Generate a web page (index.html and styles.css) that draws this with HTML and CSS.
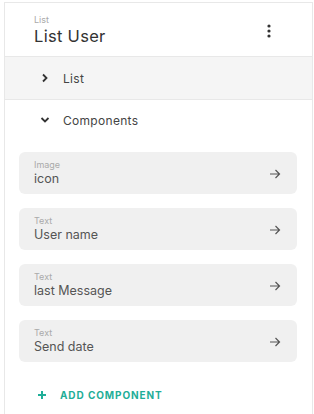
FILE: index.html
```html
<!DOCTYPE html>
<html>
<head>
<meta charset="utf-8">
<link rel="stylesheet" href="styles.css">
</head>
<body>
<div class="panel">
  <div class="header">
    <div class="titles">
      <div class="kind">List</div>
      <div class="name">List User</div>
    </div>
    <svg class="kebab" width="4" height="14" viewBox="0 0 4 14"><circle cx="2" cy="2" r="1.6"/><circle cx="2" cy="7" r="1.6"/><circle cx="2" cy="12" r="1.6"/></svg>
  </div>
  <div class="row row-closed">
    <svg class="chev" width="12" height="12" viewBox="0 0 12 12"><path d="M4 2.5 L7.5 6 L4 9.5" fill="none" stroke="#333" stroke-width="1.8"/></svg>
    <span>List</span>
  </div>
  <div class="row">
    <svg class="chev" width="12" height="12" viewBox="0 0 12 12"><path d="M2.5 4 L6 7.5 L9.5 4" fill="none" stroke="#333" stroke-width="1.8"/></svg>
    <span>Components</span>
  </div>
  <div class="cards">
    <div class="card"><div class="ct"><div class="lbl">Image</div><div class="val">icon</div></div><svg class="arrow" width="12" height="12" viewBox="0 0 12 12"><path d="M1 6 H10.5 M6.5 2 L10.5 6 L6.5 10" fill="none" stroke="#555" stroke-width="1.2"/></svg></div>
    <div class="card"><div class="ct"><div class="lbl">Text</div><div class="val">User name</div></div><svg class="arrow" width="12" height="12" viewBox="0 0 12 12"><path d="M1 6 H10.5 M6.5 2 L10.5 6 L6.5 10" fill="none" stroke="#555" stroke-width="1.2"/></svg></div>
    <div class="card"><div class="ct"><div class="lbl">Text</div><div class="val">last Message</div></div><svg class="arrow" width="12" height="12" viewBox="0 0 12 12"><path d="M1 6 H10.5 M6.5 2 L10.5 6 L6.5 10" fill="none" stroke="#555" stroke-width="1.2"/></svg></div>
    <div class="card"><div class="ct"><div class="lbl">Text</div><div class="val">Send date</div></div><svg class="arrow" width="12" height="12" viewBox="0 0 12 12"><path d="M1 6 H10.5 M6.5 2 L10.5 6 L6.5 10" fill="none" stroke="#555" stroke-width="1.2"/></svg></div>
  </div>
  <div class="add">
    <svg width="10" height="10" viewBox="0 0 10 10"><path d="M5 1 V9 M1 5 H9" stroke="#1fae98" stroke-width="2"/></svg>
    <span>ADD COMPONENT</span>
  </div>
</div>
</body>
</html>
```
FILE: styles.css
```css
html, body { margin: 0; padding: 0; background: #fff; }
body { font-family: Inter, "Noto Sans", sans-serif; color: #333; }
.panel {
  margin-left: 4px;
  width: 307px;
  height: 414px;
  border-left: 1px solid #e8e8e8;
  border-right: 1px solid #e8e8e8;
  box-sizing: content-box;
}
.header {
  margin-top: 2px;
  border-top: 1px solid #e8e8e8;
  border-bottom: 1px solid #e8e8e8;
  height: 55px;
  box-sizing: border-box;
  display: flex;
  align-items: center;
  justify-content: space-between;
  padding: 0 41px 0 29px;
}
.titles { padding-top: 1px; }
.kind { font-size: 9px; color: #aaa; line-height: 12px; }
.name { font-size: 16.5px; color: #333; line-height: 20px; letter-spacing: 0.3px; }
.kebab { fill: #333; margin-top: 2px; }
.row {
  height: 43px;
  box-sizing: border-box;
  display: flex;
  align-items: center;
  padding-left: 34px;
  font-size: 12px;
  color: #444;
  gap: 12px;
  letter-spacing: 0.3px;
}
.row-closed { background: #f5f5f5; border-bottom: 1px solid #e8e8e8; }
.row + .row { height: 40px; }
.cards { padding: 12px 15px 0 14px; display: flex; flex-direction: column; gap: 14px; }
.card {
  background: #f0f0f0;
  border-radius: 6px;
  height: 42px;
  display: flex;
  align-items: center;
  justify-content: space-between;
  padding: 0 16px 0 15px;
}
.lbl { font-size: 9px; color: #aaa; line-height: 12px; }
.val { font-size: 12.5px; color: #555; line-height: 16px; }
.arrow { margin-top: 2px; }
.add {
  display: flex;
  align-items: center;
  gap: 13px;
  padding: 27px 0 0 32px;
  color: #1fae98;
  font-size: 10px;
  font-weight: 700;
  letter-spacing: 0.9px;
}
```
